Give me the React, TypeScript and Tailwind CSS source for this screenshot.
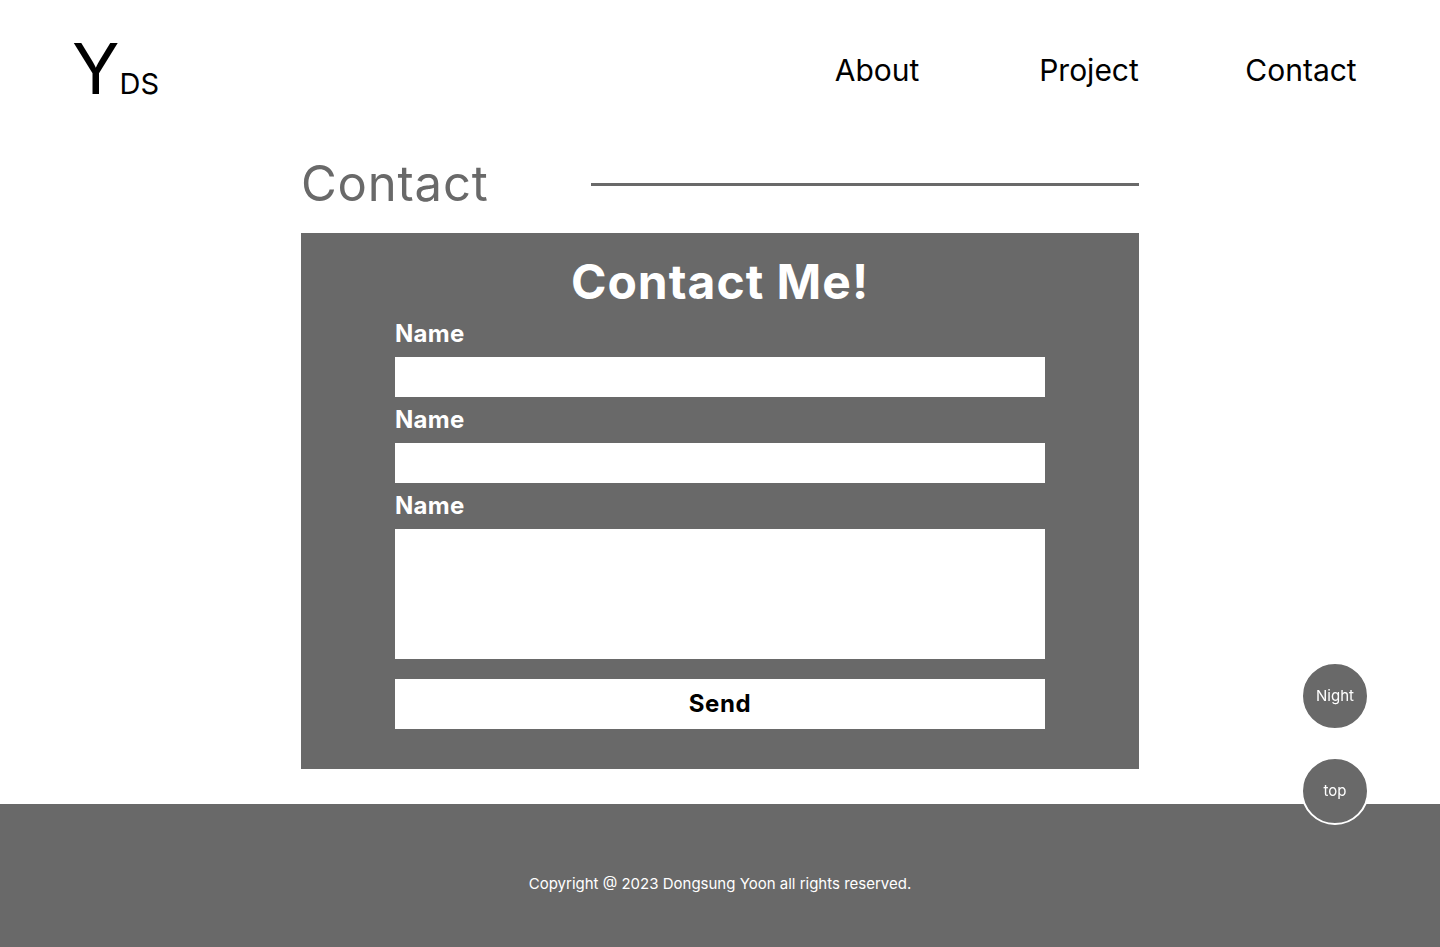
import React from 'react'

const navItems = ['About', 'Project', 'Contact']
const fields = ['Name', 'Name']

export default function App() {
  return (
    <div className="relative min-h-[947px] bg-white font-['Inter',sans-serif] text-black">
      {/* Header */}
      <header className="flex items-start justify-between pl-[72px] pr-[33px] pt-[33px]">
        <div className="flex items-baseline">
          <span className="text-[70px] leading-[72px]">Y</span>
          <span className="text-[29px] leading-none">DS</span>
        </div>
        <nav className="mt-[22px] flex">
          {navItems.map((item) => (
            <a key={item} href="#" className="w-[212px] text-center text-[30px] leading-none">
              {item}
            </a>
          ))}
        </nav>
      </header>

      {/* Contact section */}
      <section className="mx-auto mt-[55px] w-[838px]">
        <div className="flex items-center justify-between">
          <h2 className="text-[49px] leading-[48px] tracking-[0.8px] text-[#696969]">Contact</h2>
          <div className="h-[3px] w-[548px] bg-[#696969]" />
        </div>

        <div className="mt-[25px] bg-[#696969] pb-[40px] pt-[26px]">
          <h1 className="text-center text-[48px] font-bold leading-[46px] tracking-[1px] text-white">Contact Me!</h1>
          <form className="mx-auto mt-[17px] w-[650px]" onSubmit={(e) => e.preventDefault()}>
            {fields.map((label, i) => (
              <div key={i} className="mb-[11px]">
                <label className="block text-[24px] font-bold leading-none tracking-[0.3px] text-white">{label}</label>
                <input type="text" className="mt-[11px] block h-[40px] w-full bg-white px-3 outline-none" />
              </div>
            ))}
            <div>
              <label className="block text-[24px] font-bold leading-none tracking-[0.3px] text-white">Name</label>
              <textarea className="mt-[11px] block h-[130px] w-full resize-none bg-white p-3 outline-none" />
            </div>
            <button type="submit" className="mt-[20px] block h-[50px] w-full bg-white text-[24px] font-bold leading-none tracking-[0.6px] text-black">
              Send
            </button>
          </form>
        </div>
      </section>

      {/* Footer */}
      <footer className="mt-[35px] h-[143px] bg-[#696969] pt-[69px] text-center text-[15px] text-white">
        Copyright @ 2023 Dongsung Yoon all rights reserved.
      </footer>

      {/* Floating buttons */}
      <div className="fixed right-[71px] top-[662px] flex flex-col gap-[27px]">
        <button className="flex h-[68px] w-[68px] items-center justify-center rounded-full border-2 border-white bg-[#696969] text-[15px] text-white">
          Night
        </button>
        <button className="flex h-[68px] w-[68px] items-center justify-center rounded-full border-2 border-white bg-[#696969] text-[15px] text-white">
          top
        </button>
      </div>
    </div>
  )
}
